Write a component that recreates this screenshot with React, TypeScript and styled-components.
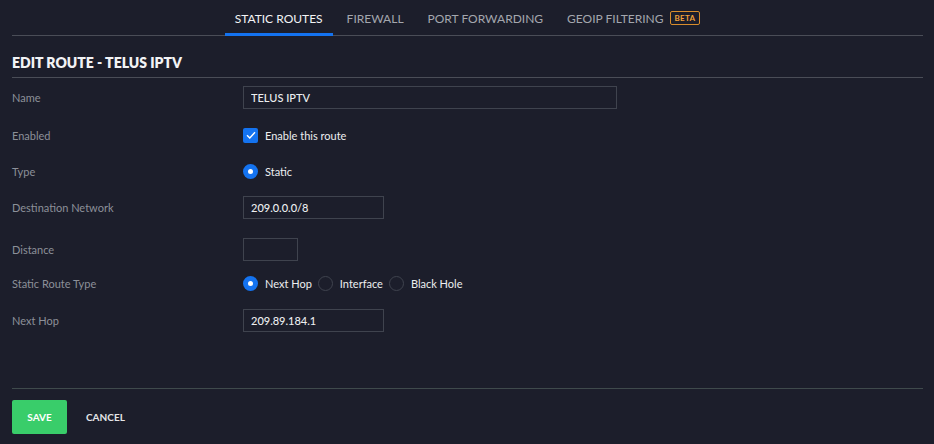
import styled, { createGlobalStyle } from "styled-components";

const GlobalStyle = createGlobalStyle`
  html, body {
    margin: 0;
    background: #1c1e2b;
  }
  body {
    font-family: Lato, "Open Sans", sans-serif;
    color: #e4e5e8;
  }
`;

export default function App() {
  return (
    <>
      <GlobalStyle />
      <Page>
        <Tabs>
          <Tab $active>Static Routes</Tab>
          <Tab>Firewall</Tab>
          <Tab>Port Forwarding</Tab>
          <Tab>
            GeoIP Filtering <Beta>BETA</Beta>
          </Tab>
        </Tabs>

        <Title>EDIT ROUTE - TELUS IPTV</Title>

        <Form>
          <Row $h={38}>
            <Label>Name</Label>
            <Input $w={374} defaultValue="TELUS IPTV" />
          </Row>
          <Row $h={38}>
            <Label>Enabled</Label>
            <Option>
              <Checkbox>
                <svg width="10" height="8" viewBox="0 0 10 8">
                  <path d="M1 4.2 L3.8 7 L9 1.2" fill="none" stroke="#fff" strokeWidth="1.4" />
                </svg>
              </Checkbox>
              Enable this route
            </Option>
          </Row>
          <Row $h={35}>
            <Label>Type</Label>
            <Option>
              <Radio $on />
              Static
            </Option>
          </Row>
          <Row $h={37}>
            <Label>Destination Network</Label>
            <Input $w={141} defaultValue="209.0.0.0/8" />
          </Row>
          <Row $h={46}>
            <Label>Distance</Label>
            <Input $w={55} defaultValue="" />
          </Row>
          <Row $h={22}>
            <Label>Static Route Type</Label>
            <Options>
              <Option>
                <Radio $on />
                Next Hop
              </Option>
              <Option>
                <Radio />
                Interface
              </Option>
              <Option>
                <Radio />
                Black Hole
              </Option>
            </Options>
          </Row>
          <Row $h={52}>
            <Label>Next Hop</Label>
            <Input $w={141} defaultValue="209.89.184.1" />
          </Row>
        </Form>

        <Footer>
          <SaveButton>SAVE</SaveButton>
          <CancelButton>CANCEL</CancelButton>
        </Footer>
      </Page>
    </>
  );
}

const Page = styled.div`
  width: 934px;
  height: 444px;
  box-sizing: border-box;
  padding: 0 11px 0 12px;
  display: flex;
  flex-direction: column;
`;

const Tabs = styled.nav`
  height: 36px;
  box-sizing: border-box;
  border-bottom: 1px solid #4a4d57;
  display: flex;
  justify-content: center;
  gap: 4px;
`;

const Tab = styled.div<{ $active?: boolean }>`
  display: flex;
  align-items: center;
  gap: 6px;
  padding: 3px 10px 0;
  margin-bottom: -1px;
  font-size: 12px;
  text-transform: uppercase;
  color: ${(p) => (p.$active ? "#f2f3f5" : "#a4a7ae")};
  border-bottom: 3px solid ${(p) => (p.$active ? "#1473f0" : "transparent")};
`;

const Beta = styled.span`
  font-size: 8px;
  font-weight: 700;
  color: #f2a13a;
  border: 1px solid #d98d2c;
  border-radius: 2px;
  padding: 1px 4px;
  letter-spacing: 0.3px;
`;

const Title = styled.h1`
  margin: 0;
  height: 42px;
  box-sizing: border-box;
  padding-top: 18px;
  border-bottom: 1px solid #4a4d57;
  font-size: 14px;
  font-weight: 800;
  color: #f2f3f5;
`;

const Form = styled.div`
  display: flex;
  flex-direction: column;
  flex: 1;
  border-bottom: 1px solid #3f4a4c;
`;

const Row = styled.div<{ $h: number }>`
  height: ${(p) => p.$h}px;
  display: flex;
  align-items: center;
`;

const Label = styled.div`
  width: 231px;
  font-size: 11px;
  color: #8c9099;
`;

const Input = styled.input<{ $w: number }>`
  width: ${(p) => p.$w}px;
  height: 23px;
  box-sizing: border-box;
  background: transparent;
  border: 1px solid #3f434e;
  padding: 0 7px;
  font-family: inherit;
  font-size: 11px;
  font-weight: 500;
  color: #eceef0;
  outline: none;
`;

const Options = styled.div`
  display: flex;
  align-items: center;
  gap: 6px;
`;

const Option = styled.label`
  display: flex;
  align-items: center;
  gap: 7px;
  font-size: 11px;
  color: #eceef0;
`;

const Checkbox = styled.span`
  width: 15px;
  height: 15px;
  border-radius: 2px;
  background: #1473f0;
  display: flex;
  align-items: center;
  justify-content: center;
`;

const Radio = styled.span<{ $on?: boolean }>`
  width: 15px;
  height: 15px;
  box-sizing: border-box;
  border-radius: 50%;
  background: ${(p) => (p.$on ? "#1473f0" : "transparent")};
  border: ${(p) => (p.$on ? "none" : "1px solid #3f434e")};
  display: flex;
  align-items: center;
  justify-content: center;
  &::after {
    content: "";
    width: 5px;
    height: 5px;
    border-radius: 50%;
    background: #fff;
    display: ${(p) => (p.$on ? "block" : "none")};
  }
`;

const Footer = styled.div`
  height: 55px;
  display: flex;
  align-items: flex-start;
  padding-top: 11px;
  box-sizing: border-box;
  gap: 19px;
`;

const SaveButton = styled.button`
  width: 55px;
  height: 34px;
  border: none;
  border-radius: 2px;
  background: #39cd6a;
  color: #fff;
  font-family: inherit;
  font-size: 10px;
  font-weight: 700;
`;

const CancelButton = styled.button`
  height: 34px;
  border: none;
  background: transparent;
  color: #e4e5e8;
  font-family: inherit;
  font-size: 10px;
  font-weight: 700;
  padding: 0;
`;
